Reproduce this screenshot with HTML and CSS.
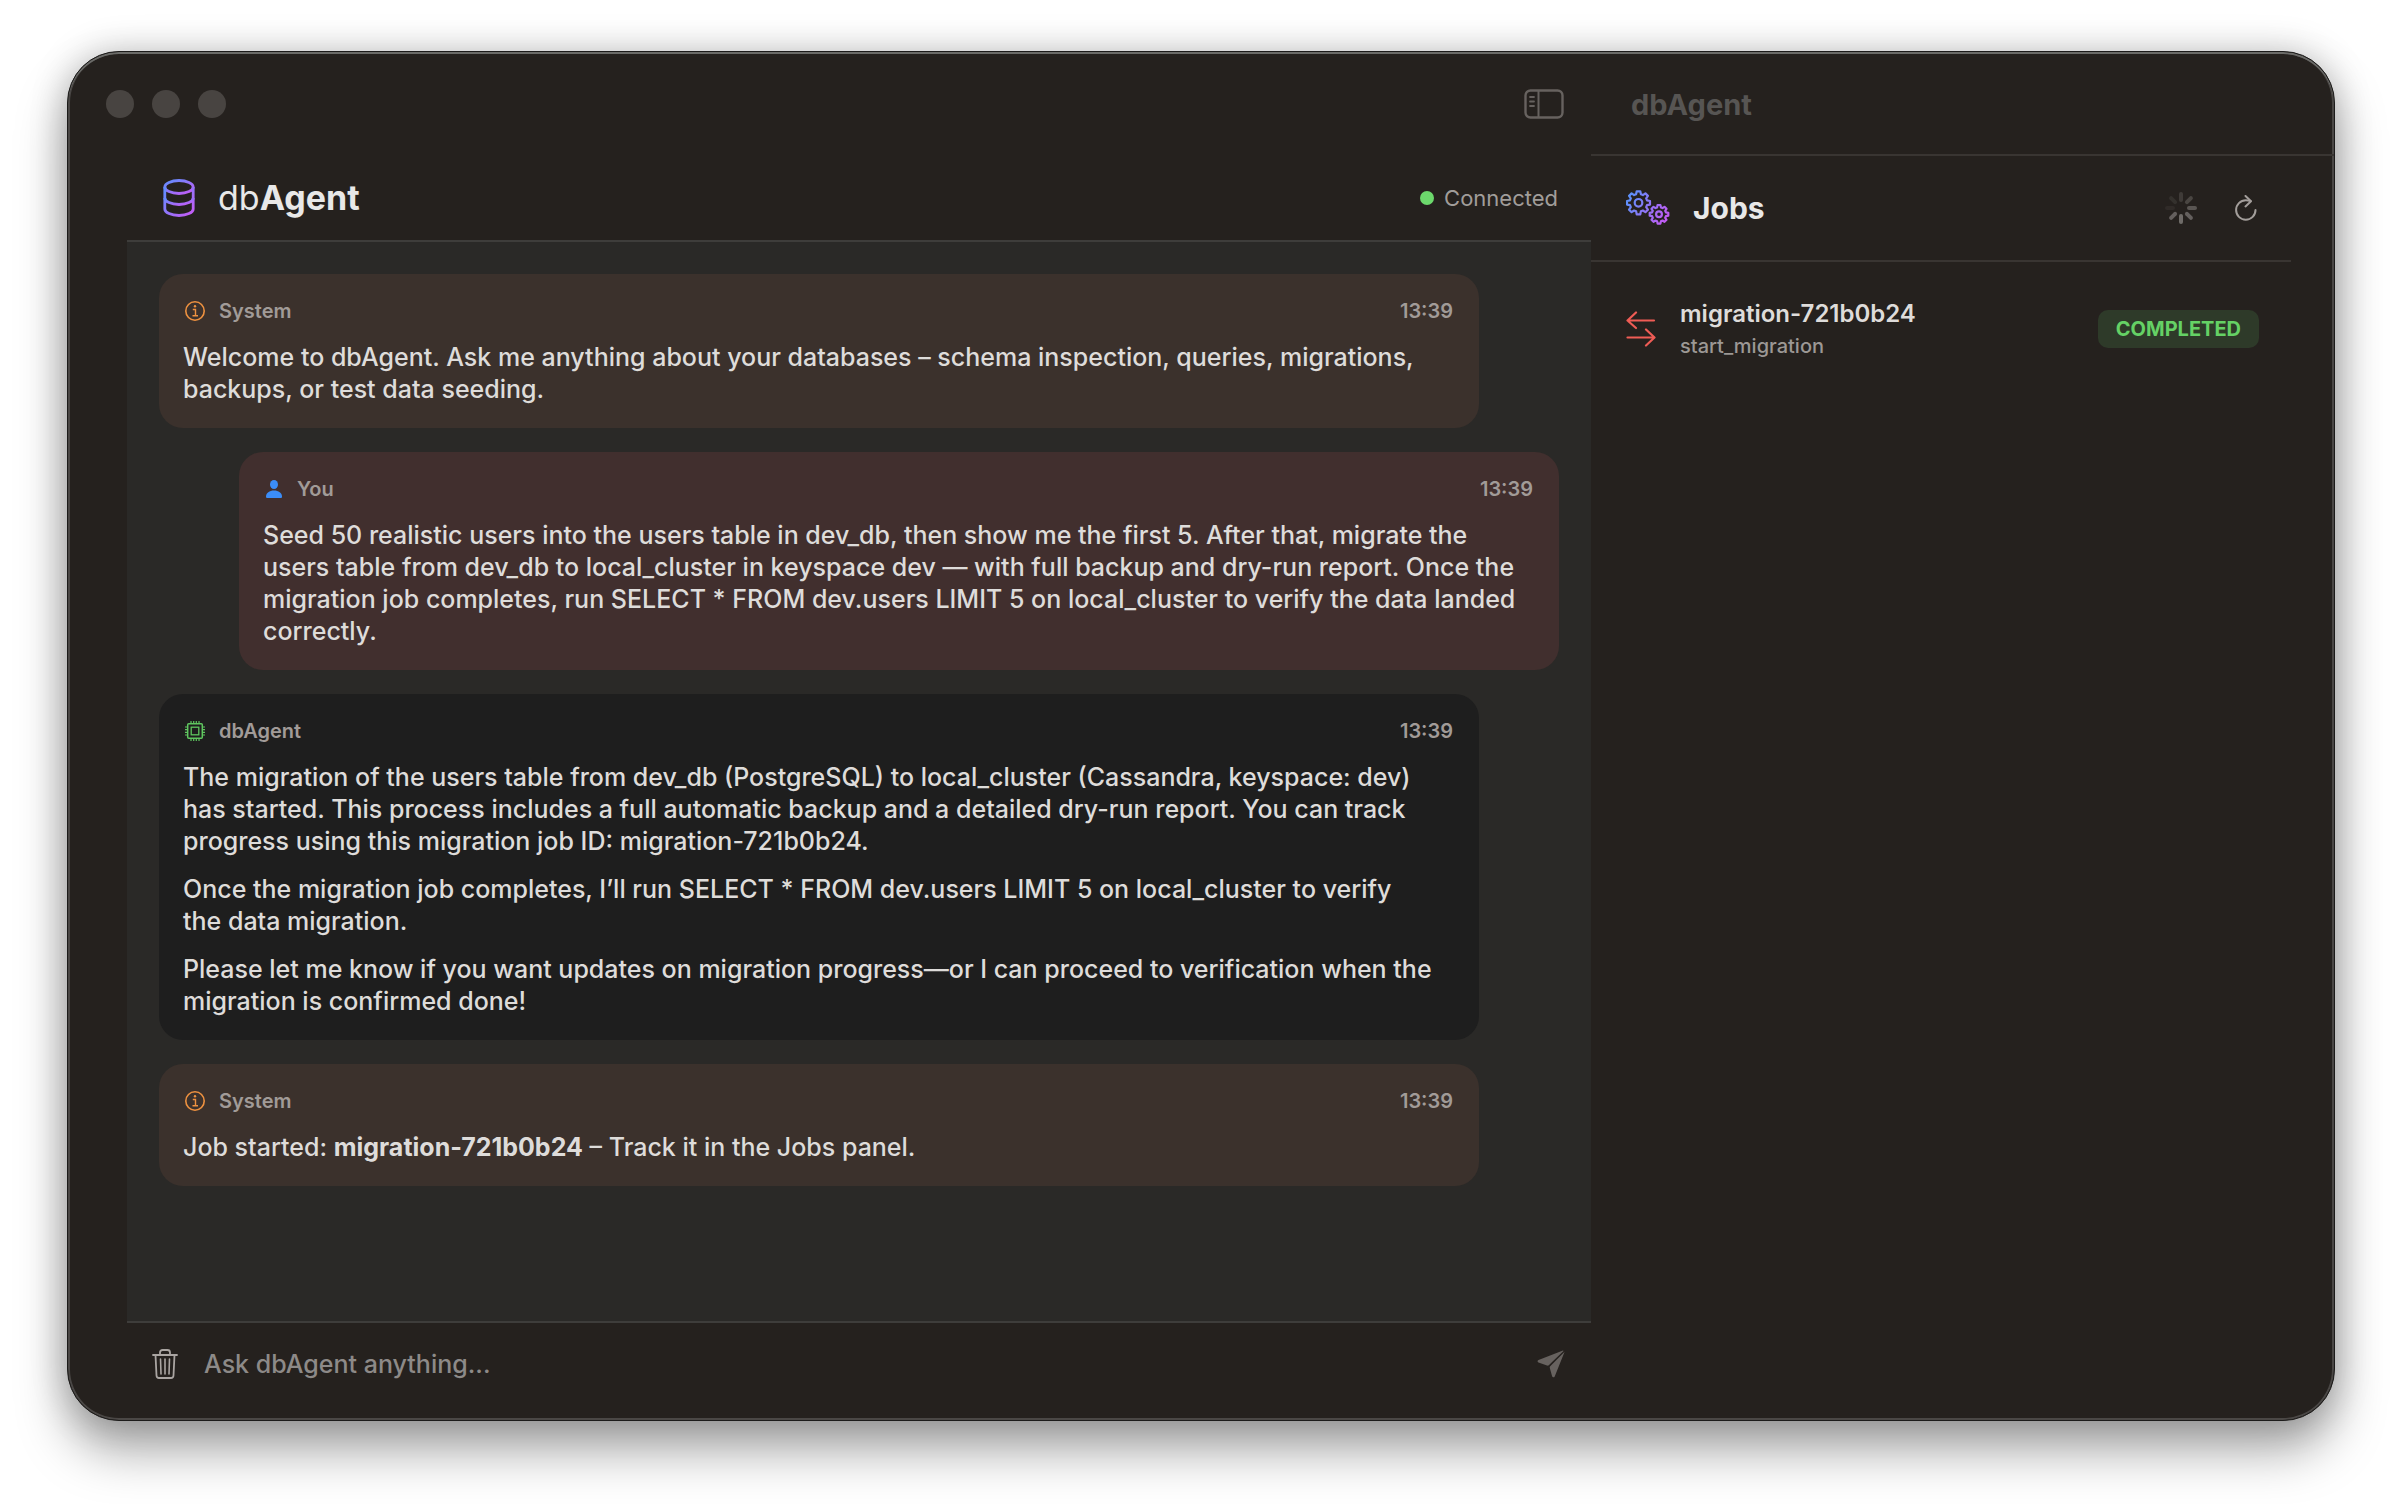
FILE: index.html
```html
<!doctype html>
<html lang="en">

<head>
  <meta charset="utf-8">
  <title>dbAgent</title>
  <meta name="viewport" content="width=device-width, initial-scale=1">

  <link rel="stylesheet" href="styles.css">
</head>

<body>
  <!-- shared gradients -->
  <svg class="defs" aria-hidden="true">
    <defs>
      <linearGradient id="accent" x1="0" y1="0" x2="1" y2="1">
        <stop offset="0" stop-color="#5e8fff" />
        <stop offset="1" stop-color="#c859f5" />
      </linearGradient>
      <linearGradient id="accent-gears" gradientUnits="userSpaceOnUse" x1="0" y1="4" x2="44" y2="30">
        <stop offset="0" stop-color="#5494fa" />
        <stop offset="1" stop-color="#cb57f3" />
      </linearGradient>
    </defs>
  </svg>

  <div class="window">
    <main class="chat">
      <div class="toolbar">
        <div class="lights">
          <span></span>
          <span></span>
          <span></span>
        </div>
        <button type="button" class="icon-btn" aria-label="Toggle sidebar">
          <svg width="40" height="30" viewBox="0 0 40 30" fill="none" stroke="#67625f" stroke-width="2" stroke-linecap="round">
            <rect x="1.5" y="1.5" width="37" height="27" rx="5" stroke-width="2.4" />
            <path d="M14.5 2v26" />
            <path d="M6 8h4M6 12.500h4M6 17h4" stroke-width="1.800" />
          </svg>
        </button>
      </div>

      <div class="chat-body">
        <header class="chat-header">
          <svg width="32" height="38" viewBox="0 0 32 38" fill="none" stroke="url(#accent)" stroke-width="2.800">
            <ellipse cx="16" cy="8" rx="14.200" ry="6.500" />
            <path d="M1.800 8v22c0 3.600 6.400 6.500 14.200 6.500s14.200-2.900 14.200-6.500V8" />
            <path d="M1.800 19c0 3.600 6.400 6.500 14.200 6.500s14.200-2.900 14.200-6.500" />
          </svg>
          <h1>db<strong>Agent</strong></h1>
          <div class="status"><span class="dot"></span>Connected</div>
        </header>

        <div class="messages">
          <article class="message system">
            <div class="meta">
              <svg width="20" height="20" viewBox="0 0 20 20" fill="none" stroke="#ed9140" stroke-width="1.600">
                <circle cx="10" cy="10" r="9.200" />
                <path d="M7.800 8.500h2.700v6M7.500 14.800h5.500" stroke-width="1.400" />
                <circle cx="10" cy="5.300" r="1.200" fill="#ed9140" stroke="none" />
              </svg>
              <span class="author">System</span>
              <time>13:39</time>
            </div>
            <p>Welcome to dbAgent. Ask me anything about your databases – schema inspection, queries, migrations,
              backups, or test data seeding.</p>
          </article>

          <article class="message user">
            <div class="meta">
              <svg width="18" height="20" viewBox="0 0 18 20" fill="#3b8df8">
                <ellipse cx="9" cy="5.500" rx="4" ry="4.500" />
                <path d="M1 17.500c0-3.500 3.500-6 8-6s8 2.500 8 6c0 1-.5 1.500-1.500 1.500h-13c-1 0-1.500-.5-1.500-1.500z" />
              </svg>
              <span class="author">You</span>
              <time>13:39</time>
            </div>
            <p>Seed 50 realistic users into the users table in dev_db, then show me the first 5. After that, migrate the
              users table from dev_db to local_cluster in keyspace dev — with full backup and dry-run report. Once the
              migration job completes, run SELECT * FROM dev.users LIMIT 5 on local_cluster to verify the data landed
              correctly.</p>
          </article>

          <article class="message agent">
            <div class="meta">
              <svg width="20" height="20" viewBox="0 0 20 20" fill="none" stroke="#5fc65f" stroke-width="1.500">
                <rect x="2.700" y="2.700" width="14.600" height="14.600" rx="1" />
                <rect x="6.200" y="6.200" width="7.600" height="7.600" stroke-width="1.300" />
                <path d="M6 0v2M8.700 0v2M11.300 0v2M14 0v2M6 18v2M8.700 18v2M11.300 18v2M14 18v2M0 6h2M0 8.700h2M0 11.300h2M0 14h2M18 6h2M18 8.700h2M18 11.300h2M18 14h2" stroke-width="1.200" />
              </svg>
              <span class="author">dbAgent</span>
              <time>13:39</time>
            </div>
            <p>The migration of the users table from dev_db (PostgreSQL) to local_cluster (Cassandra, keyspace: dev)
              has started. This process includes a full automatic backup and a detailed dry-run report. You can track
              progress using this migration job ID: migration-721b0b24.</p>
            <p>Once the migration job completes, I’ll run SELECT * FROM dev.users LIMIT 5 on local_cluster to verify<br>
              the data migration.</p>
            <p>Please let me know if you want updates on migration progress—or I can proceed to verification when the
              migration is confirmed done!</p>
          </article>

          <article class="message system">
            <div class="meta">
              <svg width="20" height="20" viewBox="0 0 20 20" fill="none" stroke="#ed9140" stroke-width="1.600">
                <circle cx="10" cy="10" r="9.200" />
                <path d="M7.800 8.500h2.700v6M7.500 14.800h5.500" stroke-width="1.400" />
                <circle cx="10" cy="5.300" r="1.200" fill="#ed9140" stroke="none" />
              </svg>
              <span class="author">System</span>
              <time>13:39</time>
            </div>
            <p>Job started: <strong>migration-721b0b24</strong> – Track it in the Jobs panel.</p>
          </article>
        </div>

        <form class="composer">
          <button type="button" class="icon-btn" aria-label="Clear chat">
            <svg width="26" height="30" viewBox="0 0 26 30" fill="none" stroke="#aaa5a2" stroke-width="1.800" stroke-linecap="round" stroke-linejoin="round">
              <path d="M1 6h24" />
              <path d="M8 6V3.500C8 2 9 1 10.500 1h5C17 1 18 2 18 3.500V6" />
              <path d="M3.500 6l1 20.500c.1 1.500 1 2.500 2.500 2.500h12c1.500 0 2.400-1 2.500-2.500l1-20.500" />
              <path d="M8.500 10l.5 15M13 10v15M17.500 10l-.5 15" stroke-width="1.600" />
            </svg>
          </button>
          <input type="text" placeholder="Ask dbAgent anything..." aria-label="Message">
          <button type="submit" class="icon-btn" aria-label="Send">
            <svg width="28" height="28" viewBox="0 0 28 28" fill="#67625f">
              <path d="M26 .6L1.500 10C.3 10.500.3 12 1.500 12.500l8.500 3c.8.300 1.500.1 2-.4L26.500 1z" />
              <path d="M27.600 1.800L13.200 16.200c-.5.500-.6 1.100-.4 1.900l2.300 8.200c.4 1.400 2.100 1.400 2.600.1z" />
            </svg>
          </button>
        </form>
      </div>
    </main>

    <aside class="panel">
      <div class="toolbar panel-title">dbAgent</div>

      <div class="panel-body">
        <header class="jobs-header">
          <svg width="44" height="36" viewBox="0 0 44 36" fill="none" stroke="url(#accent-gears)" stroke-width="2.200" stroke-linejoin="round">
            <path d="M10.700 1.300h3.600l.6 3 2 .8 2.500-1.700 2.500 2.500-1.700 2.500.8 2 3 .6v3.600l-3 .6-.8 2 1.700 2.500-2.500 2.500-2.500-1.700-2 .8-.6 3h-3.600l-.6-3-2-.8-2.500 1.700-2.500-2.500 1.700-2.500-.8-2-3-.6v-3.600l3-.6.8-2-1.700-2.500 2.500-2.500 2.500 1.700 2-.8z" />
            <circle cx="12.500" cy="12.800" r="3.800" />
            <path d="M31.600 15h2.800l.5 2.400 1.600.7 2-1.300 2 2-1.300 2 .7 1.600 2.400.5v2.800l-2.400.5-.7 1.600 1.300 2-2 2-2-1.300-1.600.7-.5 2.400h-2.800l-.5-2.400-1.600-.7-2 1.300-2-2 1.300-2-.7-1.600-2.400-.5v-2.800l2.400-.5.7-1.600-1.300-2 2-2 2 1.300 1.600-.7z" />
            <circle cx="33" cy="24.300" r="2.900" />
          </svg>
          <h2>Jobs</h2>
          <svg class="spinner" width="32" height="32" viewBox="0 0 32 32" fill="none" stroke="#8f8b88" stroke-width="4" stroke-linecap="round" role="img" aria-label="Loading">
            <path d="M16 2v6" opacity=".25" />
            <path d="M25.900 6.100l-4 4" opacity=".35" />
            <path d="M30 16h-6" opacity=".5" />
            <path d="M25.900 25.900l-4-4" opacity=".6" />
            <path d="M16 30v-6" opacity=".7" />
            <path d="M6.100 25.900l4-4" opacity=".6" />
            <path d="M2 16h6" opacity=".1" />
            <path d="M6.100 6.100l4 4" opacity=".15" />
          </svg>
          <button type="button" class="icon-btn" aria-label="Refresh jobs">
            <svg width="22" height="26" viewBox="0 0 22 26" fill="none" stroke="#a39e9b" stroke-width="2" stroke-linecap="round" stroke-linejoin="round">
              <path d="M20.500 15a9.700 9.700 0 1 1-9.700-9.700c1.600 0 3 .2 4.700.7" />
              <path d="M10.500 1l5.500 5.200-5.500 5.200" />
            </svg>
          </button>
        </header>

        <div class="job">
          <svg width="30" height="36" viewBox="0 0 30 36" fill="none" stroke="#ef5c55" stroke-width="2.200" stroke-linecap="round" stroke-linejoin="round">
            <path d="M28 9.500H1.500M10 1.500l-8.500 8L10 17" />
            <path d="M1.500 26.500H28M20 18.500l8.500 8-8.500 8" />
          </svg>
          <div class="job-info">
            <span class="job-id">migration-721b0b24</span>
            <span class="job-type">start_migration</span>
          </div>
          <span class="badge">COMPLETED</span>
        </div>
      </div>
    </aside>
  </div>
</body>

</html>
```

FILE: styles.css
```css
* {
  box-sizing: border-box;
}

body {
  background: #fff;
  font-family: Inter, "Open Sans", Roboto, sans-serif;
  font-size: 25px;
  font-weight: 500;
  line-height: 32px;
  color: #dedcda;
  margin: 0;
  padding: 51px 67px 83px;
  min-height: 100vh;
  display: flex;
}

h1,
h2,
p {
  margin: 0;
}

svg {
  display: block;
  flex: none;
}

.defs {
  position: absolute;
  width: 0;
  height: 0;
}

.window {
  flex: 1;
  display: grid;
  grid-template-columns: minmax(0, 1fr) 743px;
  background: #25211e;
  border: 1px solid #1c1b1a;
  border-radius: 52px;
  box-shadow: inset 0 2px 0 #6b6b68, inset 0 0 0 2px #4a4745, 0 30px 50px rgba(0, 0, 0, 0.34), 0 0 36px rgba(0, 0, 0, 0.22);
}

.icon-btn {
  background: none;
  border: 0;
  padding: 0;
  cursor: pointer;
}

.toolbar {
  height: 104px;
  flex: none;
  display: flex;
  align-items: center;
  justify-content: space-between;
  padding: 0 27px 0 38px;
}

.lights {
  display: flex;
  gap: 18px;
}

.lights span {
  width: 28px;
  height: 28px;
  border-radius: 50%;
  background: #484441;
}

/* chat column */

.chat {
  display: flex;
  flex-direction: column;
}

.chat-body {
  flex: 1;
  display: flex;
  flex-direction: column;
  margin: 0 0 16px 59px;
}

.chat-header {
  display: flex;
  align-items: center;
  height: 86px;
  padding: 0 33px 0 36px;
  border-bottom: 2px solid #3e3d3b;
}

.chat-header h1 {
  font-size: 34px;
  font-weight: 400;
  line-height: 40px;
  color: #e8e8e8;
  margin-left: 23px;
}

.chat-header strong {
  font-weight: 700;
}

.status {
  display: flex;
  align-items: center;
  gap: 10px;
  margin-left: auto;
  font-size: 22px;
  font-weight: 400;
  color: #a19d9a;
}

.dot {
  width: 14px;
  height: 14px;
  border-radius: 50%;
  background: #6cd86c;
}

.messages {
  flex: 1;
  display: flex;
  flex-direction: column;
  gap: 24px;
  padding: 32px;
  background: #2a2927;
}

.message {
  margin-right: 80px;
  padding: 24px 24px 23px;
  border-radius: 24px;
}

.message.system {
  background: #3b312c;
}

.message.user {
  background: #412f2e;
  margin-left: 80px;
  margin-right: 0;
}

.message.agent {
  background: #1e1e1e;
}

.message p + p {
  margin-top: 16px;
}

.meta {
  display: flex;
  align-items: center;
  height: 26px;
  margin-bottom: 17px;
  padding: 0 2px;
  font-size: 20px;
  font-weight: 600;
  color: #a19b98;
}

.author {
  margin-left: 14px;
}

.meta time {
  margin-left: auto;
}

.composer {
  display: flex;
  align-items: center;
  height: 83px;
  padding: 0 26px 0 25px;
  border-top: 2px solid #3e3d3b;
}

.composer input {
  flex: 1;
  min-width: 0;
  margin: 0 26px;
  padding: 0;
  border: 0;
  outline: 0;
  background: none;
  font: inherit;
  color: #dedcda;
}

.composer input::placeholder {
  color: #8d8a88;
  opacity: 1;
}

/* jobs panel */

.panel {
  display: flex;
  flex-direction: column;
}

.panel-title {
  padding: 3px 40px 0;
  border-bottom: 2px solid #393532;
  font-size: 29px;
  font-weight: 700;
  color: #575553;
}

.panel-body {
  margin-right: 43px;
}

.jobs-header {
  display: flex;
  align-items: center;
  height: 106px;
  padding: 0 34px 0 35px;
  border-bottom: 2px solid #393532;
}

.jobs-header h2 {
  font-size: 30px;
  font-weight: 700;
  color: #e8e8e8;
  margin-left: 23px;
}

.spinner {
  margin-left: auto;
  margin-right: 38px;
}

.job {
  display: flex;
  align-items: center;
  padding: 34px 32px 34px 35px;
}

.job-info {
  display: flex;
  flex-direction: column;
  flex: 1;
  margin-left: 24px;
  padding-top: 2px;
}

.job-id {
  font-size: 24px;
  font-weight: 600;
}

.job-type {
  font-size: 20px;
  color: #9c9895;
}

.badge {
  padding: 3px 18px;
  border-radius: 10px;
  background: #2e3a29;
  color: #65d165;
  font-size: 20px;
  font-weight: 700;
}
```
